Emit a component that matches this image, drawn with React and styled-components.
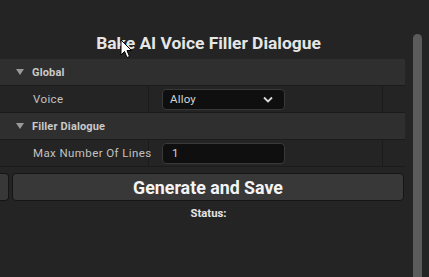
import React from "react";
import styled, { createGlobalStyle } from "styled-components";

const Global = createGlobalStyle`
  html, body { margin: 0; padding: 0; background: #242424; }
  body { font-family: Roboto, "Noto Sans", "Liberation Sans", sans-serif; }
`;

const Page = styled.div`
  position: relative;
  width: 429px;
  height: 277px;
  overflow: hidden;
  display: flex;
  background: #242424;
`;

const Content = styled.div`
  width: 405px;
  display: flex;
  flex-direction: column;
`;

const ScrollTrack = styled.div`
  flex: 1;
  display: flex;
  padding-left: 8px;
`;

const Thumb = styled.div`
  width: 9px;
  margin-top: 34px;
  border-radius: 5px 5px 0 0;
  background: #5b5b5b;
`;

const Title = styled.div`
  margin-top: 33px;
  padding-left: 12px;
  height: 20px;
  line-height: 20px;
  text-align: center;
  font-size: 17.4px;
  font-weight: 700;
  color: #e6e6e6;
`;

const Table = styled.div`
  margin-top: 6px;
  display: flex;
  flex-direction: column;
`;

const Section = styled.div`
  height: 26px;
  border-bottom: 1px solid #1b1b1b;
  background: #2f2f2f;
  display: flex;
  align-items: center;
  padding-left: 16px;
  gap: 8px;
  font-size: 11px;
  font-weight: 700;
  letter-spacing: 0.15px;
  color: #c9c9c9;
`;

const Triangle = styled.span`
  width: 0;
  height: 0;
  border-left: 4.5px solid transparent;
  border-right: 4.5px solid transparent;
  border-top: 6px solid #9a9a9a;
`;

const Row = styled.div`
  height: 26px;
  border-bottom: 1px solid #1b1b1b;
  display: grid;
  grid-template-columns: 149px 234px 1fr;
  background: #242424;
`;

const Label = styled.div`
  padding-left: 33px;
  display: flex;
  align-items: center;
  font-size: 11.5px;
  letter-spacing: 0.4px;
  color: #c2c2c2;
  white-space: nowrap;
  border-right: 1px solid #1b1b1b;
`;

const Value = styled.div`
  padding-left: 13px;
  display: flex;
  align-items: center;
  border-right: 1px solid #1b1b1b;
`;

const Field = styled.div`
  box-sizing: border-box;
  width: 123px;
  height: 21px;
  background: #0f0f0f;
  border: 1px solid #393939;
  border-radius: 4px;
  display: flex;
  align-items: center;
  justify-content: space-between;
  padding: 0 ${(p) => (p.$select ? "11px" : "8px")} 0 ${(p) => (p.$select ? "7px" : "9px")};
  font-size: 11.5px;
  letter-spacing: 0.2px;
  color: #d4d4d4;
`;

const Chevron = styled.svg`
  width: 10px;
  height: 7px;
`;

const Buttons = styled.div`
  margin-top: 6px;
  display: flex;
  gap: 3px;
  height: 28px;
  padding-right: 1px;
`;

const Button = styled.div`
  box-sizing: border-box;
  flex: ${(p) => (p.$stub ? "0 0 9px" : "1")};
  height: 28px;
  background: #383838;
  border: 1px solid #151515;
  border-radius: ${(p) => (p.$stub ? "0 4px 4px 0" : "4px")};
  ${(p) => p.$stub && "border-left: none;"}
  display: flex;
  align-items: center;
  justify-content: center;
  font-size: 17.8px;
  font-weight: 700;
  color: #f4f4f4;
`;

const Status = styled.div`
  margin-top: 6px;
  padding-left: 12px;
  text-align: center;
  font-size: 11.3px;
  font-weight: 700;
  color: #e4e4e4;
`;

const Cursor = styled.svg`
  position: absolute;
  left: 120px;
  top: 39px;
  width: 13px;
  height: 20px;
`;

export default function App() {
  return (
    <>
      <Global />
      <Page>
        <Content>
          <Title>Bake AI Voice Filler Dialogue</Title>
          <Table>
            <Section>
              <Triangle />
              Global
            </Section>
            <Row>
              <Label>Voice</Label>
              <Value>
                <Field $select>
                  Alloy
                  <Chevron viewBox="0 0 10 7">
                    <path d="M1 1.5 L5 5.5 L9 1.5" fill="none" stroke="#d8d8d8" strokeWidth="1.8" />
                  </Chevron>
                </Field>
              </Value>
              <div />
            </Row>
            <Section>
              <Triangle />
              Filler Dialogue
            </Section>
            <Row>
              <Label>Max Number Of Lines</Label>
              <Value>
                <Field>1</Field>
              </Value>
              <div />
            </Row>
          </Table>
          <Buttons>
            <Button $stub />
            <Button>Generate and Save</Button>
          </Buttons>
          <Status>Status:</Status>
        </Content>
        <ScrollTrack>
          <Thumb />
        </ScrollTrack>
        <Cursor viewBox="0 0 13 20">
          <path
            d="M1 1 L1 16 L4.5 12.5 L7 18.5 L9.5 17.5 L7 11.5 L11.5 11.5 Z"
            fill="#ffffff"
            stroke="#000000"
            strokeWidth="1"
            strokeLinejoin="round"
          />
        </Cursor>
      </Page>
    </>
  );
}
